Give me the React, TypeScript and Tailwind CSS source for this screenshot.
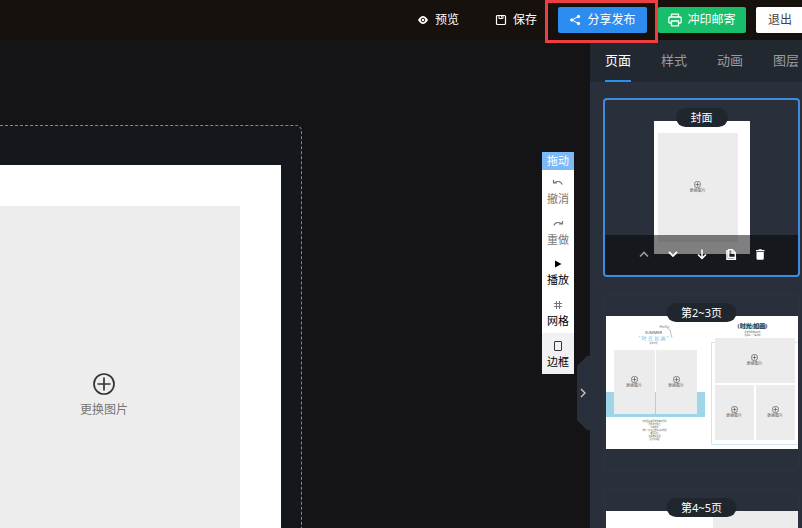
import type { ReactNode } from "react";

const tabs = ["页面", "样式", "动画", "图层"];

function PlusCircle({ className }: { className: string }) {
  return (
    <svg viewBox="0 0 22 22" fill="none" stroke="#333" className={className}>
      <circle cx="11" cy="11" r="10" strokeWidth="1.7" />
      <path d="M11 4.5v13M4.5 11h13" strokeWidth="1.7" />
    </svg>
  );
}

function MiniPhoto({ className }: { className: string }) {
  return (
    <div className={`flex flex-col items-center justify-center bg-[#ececec] ${className}`}>
      <PlusCircle className="size-[7px]" />
      <span className="text-[4px] leading-[6px] text-[#666]">更换图片</span>
    </div>
  );
}

function PageCard({ title, active, children }: { title: string; active?: boolean; children: ReactNode }) {
  return (
    <li
      className={`relative flex h-[179px] shrink-0 items-center justify-center overflow-hidden rounded border-2 ${
        active ? "border-[#3d8ce0]" : "border-[#2c313b]"
      }`}
    >
      {children}
      <span className="absolute top-2 left-1/2 h-[19px] -translate-x-1/2 rounded-full bg-[#1f262e] px-[15px] text-[11px] leading-[19px] whitespace-nowrap text-white">
        {title}
      </span>
      {active && (
        <div className="absolute inset-x-0 bottom-0 flex h-10 items-center justify-center gap-[13px] bg-black/50 text-white">
          <button aria-label="上移" className="size-4 text-[#999]">
            <svg viewBox="0 0 16 16" fill="none" stroke="currentColor" strokeWidth="1.6">
              <path d="M4 9.5l4-4 4 4" />
            </svg>
          </button>
          <button aria-label="下移" className="size-4">
            <svg viewBox="0 0 16 16" fill="none" stroke="currentColor" strokeWidth="1.8">
              <path d="M4 5l4 4 4-4" />
            </svg>
          </button>
          <button aria-label="插入" className="size-4">
            <svg viewBox="0 0 16 16" fill="none" stroke="currentColor" strokeWidth="1.5">
              <path d="M8 2.5v9M4 7.5l4 4 4-4" />
            </svg>
          </button>
          <button aria-label="复制" className="size-4">
            <svg viewBox="0 0 16 16" fill="none" stroke="currentColor" strokeWidth="1.3">
              <path d="M5.7 2.7h3.600l3 3v4.800H5.700z" />
              <path d="M9 2.700v3.300h3.300" />
              <path d="M4 3v9.200h8.300V10" strokeWidth="1.6" />
            </svg>
          </button>
          <button aria-label="删除" className="size-4">
            <svg viewBox="0 0 16 16" fill="currentColor">
              <path d="M4 3h2.500l.5-.8h2.500l.5.800H12.500v1.300H4zM4.500 5h7.300v6.500q0 1.300-1.300 1.300H5.800Q4.500 12.800 4.500 11.500z" />
            </svg>
          </button>
        </div>
      )}
    </li>
  );
}

function CoverPage() {
  return (
    <div className="h-[133px] w-24 bg-white pt-3 pl-1">
      <MiniPhoto className="h-[109px] w-20" />
    </div>
  );
}

function SummerSpread() {
  return (
    <div className="relative h-[133px] w-48 overflow-hidden bg-white">
      <svg viewBox="0 0 192 133" className="absolute inset-0 size-full">
        <rect x="0" y="76" width="99" height="25" fill="#9fd5e8" />
        <path d="M61 12l3 2 2 8" fill="none" stroke="#999" strokeWidth=".6" />
        <path d="M193 26.500H105.500v102H193" fill="none" stroke="#cfe6f3" />
        <rect x="135" y="8" width="25" height="5" fill="#8fd0ea" />
      </svg>
      <div className="absolute top-[8px] left-[54px] text-[4px] leading-[5px] text-[#777]">Hello</div>
      <div className="absolute top-[14px] left-[28px] w-10 text-center text-[4px] leading-[5px] text-[#555]">SUMMER</div>
      <div className="absolute top-[18px] left-[21px] w-[54px] text-center text-[5px] leading-2 whitespace-nowrap text-[#6fbfe4]">
        “ 时 光 如 画 ”
      </div>
      <div className="absolute top-[25px] left-[28px] w-10 text-center text-[2px] leading-[5px] text-[#666]">夏日时光</div>
      <div className="absolute top-[34px] left-2 flex h-16 gap-px">
        <MiniPhoto className="w-[41px]" />
        <MiniPhoto className="w-[41px]" />
      </div>
      <div className="absolute top-[104px] left-[29px] w-10 text-center text-[2px] leading-[3px] whitespace-pre text-[#555]">
        {"阳光洒落在夏天的海边微风\n微风轻轻吹过\n带来花香\n我们一起走过的每段时光啊\n都是回忆\n记录美好生活\n愿岁月如画"}
      </div>
      <div className="absolute top-[5px] left-[127px] w-[40px] text-center text-[6px] leading-[10px] font-bold whitespace-nowrap text-[#333]">
        (时光·如画)
      </div>
      <div className="absolute top-[15px] left-[127px] w-[40px] text-center text-[2px] leading-[3px] text-[#555]">
        夏日里的美好时光
        <br />
        记录每一个瞬间吧
      </div>
      <div className="absolute top-[22px] left-[109px] grid w-20 grid-cols-2 gap-[2px]">
        <MiniPhoto className="col-span-2 h-[45px]" />
        <MiniPhoto className="h-[55px]" />
        <MiniPhoto className="h-[55px]" />
      </div>
    </div>
  );
}

function Tool({ label, className, children }: { label: string; className: string; children: ReactNode }) {
  return (
    <button className={`flex flex-col items-center pt-[7px] text-[11px] leading-4 ${className}`}>
      <svg viewBox="0 0 12 12" fill="none" stroke="currentColor" className="mb-[2px] size-3">
        {children}
      </svg>
      {label}
    </button>
  );
}

export default function App() {
  return (
    <div className="flex h-screen flex-col overflow-hidden bg-[#141416] font-['Noto_Sans','Noto_Sans_CJK_SC',sans-serif]">
      <header className="flex h-10 shrink-0 items-center justify-end bg-[#16110c] text-xs text-white">
        <button className="mr-9 flex items-center gap-[6px]">
          <svg viewBox="0 0 12 12" className="size-3">
            <path d="M1 6q5-8 10 0q-5 8-10 0z" fill="#fff" />
            <circle cx="6" cy="6" r="1.8" fill="#fff" stroke="#16110c" />
          </svg>
          预览
        </button>
        <button className="mr-[21px] flex items-center gap-[6px]">
          <svg viewBox="0 0 12 12" fill="none" stroke="#fff" className="size-3">
            <rect x="1.5" y="1.5" width="9" height="9" rx="1" strokeWidth="1.2" />
            <path d="M4 1.500v3h4v-3M6.500 2v1.500" />
          </svg>
          保存
        </button>
        <div className="relative mr-[11px]">
          <button className="flex h-[26px] w-[89px] items-center justify-center gap-[6px] rounded-xs bg-[#2d8cf0]">
            <svg viewBox="0 0 12 12" fill="#fff" stroke="#fff" className="size-3">
              <path d="M9.500 2.500L3 6l6.500 3.500" fill="none" />
              <circle cx="9.5" cy="2.5" r="1.2" />
              <circle cx="2.8" cy="6" r="1.2" />
              <circle cx="9.5" cy="9.5" r="1.2" />
            </svg>
            分享发布
          </button>
          <div className="pointer-events-none absolute -top-[7px] -right-[11px] -bottom-[10px] -left-[13px] z-10 border-3 border-[#ed3f3f]" />
        </div>
        <button className="mr-[10px] flex h-[26px] w-[88px] items-center justify-center gap-[5px] rounded-xs bg-[#19be6b]">
          <svg viewBox="0 0 14 14" fill="none" stroke="#fff" strokeWidth="1.3" strokeLinejoin="round" className="size-[14px]">
            <path d="M3.500 4V1.200h7V4M3.500 10H2Q.8 10 .8 9V5.200Q.8 4 2 4h10q1.200 0 1.200 1.200V9q0 1-1.200 1h-1.500M3.500 8h7v4.800h-7z" />
          </svg>
          冲印邮寄
        </button>
        <button className="h-[26px] rounded-l-xs bg-white pr-[10px] pl-3 text-[#444]">退出</button>
      </header>

      <div className="flex min-h-0 flex-1">
        <main className="relative flex min-w-0 flex-1 items-start justify-between overflow-hidden">
          <div className="mt-[85px] h-full w-[302px] rounded-tr-md border-t border-r border-dashed border-[#888] bg-[#14181c] pt-[39px] pr-5">
            <div className="h-full bg-white pt-[41px] pr-[41px]">
              <button className="flex h-full w-full flex-col items-center bg-[#ededed] pt-[167px] pr-8 text-xs text-[#777]">
                <PlusCircle className="size-[22px]" />
                <span className="mt-[7px]">更换图片</span>
              </button>
            </div>
          </div>
          <div className="mt-28 mr-4 flex w-8 flex-col bg-white">
            <div className="h-[18px] bg-[#7db8f7] text-center text-[11px] leading-[18px] text-white">拖动</div>
            <Tool label="撤消" className="h-[41px] text-[#777]">
              <path d="M1.500 3v3H5M2 5.800Q8 2.500 10.200 7.500" strokeWidth="1.2" />
            </Tool>
            <Tool label="重做" className="h-10 text-[#777]">
              <path d="M10.500 3v3H7M10 5.800Q4 2.500 1.800 7.500" strokeWidth="1.2" />
            </Tool>
            <Tool label="播放" className="h-[41px] text-black">
              <path d="M3 2.500L9.500 6L3 9.500z" fill="currentColor" stroke="none" />
            </Tool>
            <Tool label="网格" className="h-[41px] text-black">
              <path d="M4.500 2v8M7.500 2v8M2 4.500h8M2 7.500h8" stroke="#777" />
            </Tool>
            <Tool label="边框" className="h-[41px] bg-[#f1f1f4] text-black">
              <rect x="2.5" y="1.5" width="7" height="9" rx=".5" stroke="#333" />
            </Tool>
          </div>
          <button aria-label="收起面板" className="absolute top-[316px] right-0 h-[74px] w-[13px]">
            <svg viewBox="0 0 13 74" className="size-full">
              <path d="M13 0H10L0 10v54l10 10h3z" fill="#2a303b" />
              <path d="M4 33l4 4-4 4" fill="none" stroke="#ccc" strokeWidth="1.3" />
            </svg>
          </button>
        </main>

        <aside className="flex w-[212px] shrink-0 flex-col overflow-hidden bg-[#2a303b]">
          <nav className="flex h-[42px] shrink-0 gap-[30px] bg-[#212830] pl-[15px] text-[13px]">
            {tabs.map((tab, i) => (
              <button
                key={tab}
                className={`shrink-0 border-b-2 pt-[2px] ${i === 0 ? "border-[#2d8cf0] text-white" : "border-transparent text-[#999da3]"}`}
              >
                {tab}
              </button>
            ))}
          </nav>
          <ul className="flex flex-col gap-4 pt-4 pr-[2px] pl-[13px]">
            <PageCard title="封面" active>
              <CoverPage />
            </PageCard>
            <PageCard title="第2~3页">
              <SummerSpread />
            </PageCard>
            <PageCard title="第4~5页">
              <div className="flex h-[133px] w-48 justify-end bg-white">
                <div className="w-[85px] bg-[#ececec]" />
              </div>
            </PageCard>
          </ul>
        </aside>
      </div>
    </div>
  );
}
